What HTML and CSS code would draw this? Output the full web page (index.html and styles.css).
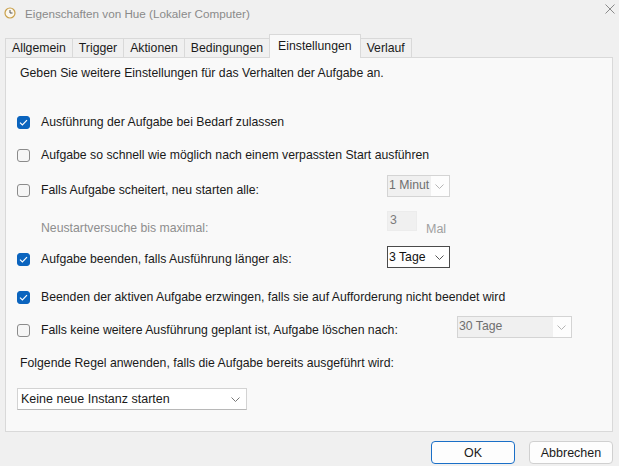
FILE: index.html
```html
<!DOCTYPE html>
<html lang="de">
<head>
<meta charset="utf-8">
<title>Eigenschaften von Hue</title>
<link rel="stylesheet" href="styles.css">
</head>
<body>
<div class="window">
  <div class="titlebar">
    <svg class="app-icon" width="12" height="12" viewBox="0 0 12 12">
      <circle cx="6" cy="6" r="5" fill="#fbf7ee" stroke="#c9a04a" stroke-width="1.2"/>
      <path d="M6 3 V6 H8.5" fill="none" stroke="#555" stroke-width="1"/>
    </svg>
    <span class="title">Eigenschaften von Hue (Lokaler Computer)</span>
    <svg class="close" width="10" height="10" viewBox="0 0 10 10">
      <path d="M0.5 0.5 L9.5 9.5 M9.5 0.5 L0.5 9.5" stroke="#8a8a8a" stroke-width="1"/>
    </svg>
  </div>

  <div class="tabs">
    <div class="tab">Allgemein</div>
    <div class="tab">Trigger</div>
    <div class="tab">Aktionen</div>
    <div class="tab">Bedingungen</div>
    <div class="tab tab-active">Einstellungen</div>
    <div class="tab">Verlauf</div>
  </div>

  <div class="panel">
    <div class="intro">Geben Sie weitere Einstellungen für das Verhalten der Aufgabe an.</div>

    <div class="row row-1">
      <div class="label"><span class="cb cb-checked"><svg width="9" height="7" viewBox="0 0 9 7"><path d="M1 3.6 L3.4 6 L8 1.2" fill="none" stroke="#fff" stroke-width="1.2"/></svg></span><span>Ausführung der Aufgabe bei Bedarf zulassen</span></div>
    </div>

    <div class="row row-2">
      <div class="label"><span class="cb"></span><span>Aufgabe so schnell wie möglich nach einem verpassten Start ausführen</span></div>
    </div>

    <div class="row row-3">
      <div class="label label-fixed lab-mt7"><span class="cb"></span><span>Falls Aufgabe scheitert, neu starten alle:</span></div>
      <div class="select select-disabled select-small">
        <span class="select-value">1 Minut</span>
        <svg class="chev" width="9" height="5" viewBox="0 0 9 5"><path d="M0.5 0.5 L4.5 4.5 L8.5 0.5" fill="none" stroke="#b5b5b5" stroke-width="1"/></svg>
      </div>
    </div>

    <div class="row row-4">
      <div class="label label-fixed lab-mt9 muted"><span class="cb-space"></span><span>Neustartversuche bis maximal:</span></div>
      <div class="field">3</div>
      <div class="unit">Mal</div>
    </div>

    <div class="row row-5">
      <div class="label label-fixed lab-mt5"><span class="cb cb-checked"><svg width="9" height="7" viewBox="0 0 9 7"><path d="M1 3.6 L3.4 6 L8 1.2" fill="none" stroke="#fff" stroke-width="1.2"/></svg></span><span>Aufgabe beenden, falls Ausführung länger als:</span></div>
      <div class="select select-active select-small">
        <span class="select-value">3 Tage</span>
        <svg class="chev" width="9" height="5" viewBox="0 0 9 5"><path d="M0.5 0.5 L4.5 4.5 L8.5 0.5" fill="none" stroke="#555" stroke-width="1"/></svg>
      </div>
    </div>

    <div class="row row-6">
      <div class="label"><span class="cb cb-checked"><svg width="9" height="7" viewBox="0 0 9 7"><path d="M1 3.6 L3.4 6 L8 1.2" fill="none" stroke="#fff" stroke-width="1.2"/></svg></span><span>Beenden der aktiven Aufgabe erzwingen, falls sie auf Aufforderung nicht beendet wird</span></div>
    </div>

    <div class="row row-7">
      <div class="label label-wide lab-mt6"><span class="cb"></span><span>Falls keine weitere Ausführung geplant ist, Aufgabe löschen nach:</span></div>
      <div class="select select-disabled select-wide">
        <span class="select-value">30 Tage</span>
        <svg class="chev" width="9" height="5" viewBox="0 0 9 5"><path d="M0.5 0.5 L4.5 4.5 L8.5 0.5" fill="none" stroke="#b5b5b5" stroke-width="1"/></svg>
      </div>
    </div>

    <div class="rule-text">Folgende Regel anwenden, falls die Aufgabe bereits ausgeführt wird:</div>

    <div class="select select-rule">
      <span class="select-value">Keine neue Instanz starten</span>
      <svg class="chev" width="9" height="5" viewBox="0 0 9 5"><path d="M0.5 0.5 L4.5 4.5 L8.5 0.5" fill="none" stroke="#777" stroke-width="1"/></svg>
    </div>
  </div>

  <div class="buttons">
    <button class="btn btn-default">OK</button>
    <button class="btn">Abbrechen</button>
  </div>
</div>
</body>
</html>
```

FILE: styles.css
```css
* { box-sizing: border-box; }
html, body {
  margin: 0;
  padding: 0;
  background: #f0f0f0;
}
body {
  font-family: "Liberation Sans", Arial, sans-serif;
  font-size: 12.25px;
  color: #1a1a1a;
  width: 619px;
  height: 466px;
  overflow: hidden;
}
.window {
  display: flex;
  flex-direction: column;
  width: 619px;
  height: 466px;
}
.titlebar {
  height: 26px;
  display: flex;
  align-items: center;
  padding-left: 4px;
  padding-right: 4px;
}
.app-icon { flex: none; }
.title {
  margin-left: 9px;
  color: #8a8a8a;
  font-size: 11.7px;
  flex: 1;
}
.close {
  flex: none;
  align-self: flex-start;
  margin-top: 4px;
}
.tabs {
  display: flex;
  align-items: flex-end;
  height: 31px;
  padding-left: 5px;
  position: relative;
  z-index: 1;
}
.tab {
  height: 19px;
  padding: 1px 6px 0 6px;
  line-height: 17px;
  border: 1px solid #d9d9d9;
  border-bottom: none;
  margin-right: -1px;
  background: #f0f0f0;
  white-space: nowrap;
}
.tab-active {
  height: 24px;
  margin-bottom: -1px;
  background: #f9f9f9;
  line-height: 20px;
  padding: 1px 8px 0 8px;
  position: relative;
  z-index: 2;
}
.panel {
  margin: 0 6px 0 5px;
  height: 375px;
  border: 1px solid #d9d9d9;
  background: #f9f9f9;
  display: flex;
  flex-direction: column;
  align-items: flex-start;
}
.intro {
  margin-top: 7px;
  margin-left: 14px;
  line-height: 16px;
}
.row {
  display: flex;
  align-items: flex-start;
}
.row-1 { margin-top: 33px; }
.row-2 { margin-top: 17px; }
.row-3 { margin-top: 12px; }
.row-4 { margin-top: 13px; }
.row-5 { margin-top: 9px; }
.row-6 { margin-top: 21px; }
.row-7 { margin-top: 11px; }
.label {
  display: flex;
  align-items: center;
  margin-left: 11px;
  height: 16px;
  line-height: 16px;
  white-space: nowrap;
}
.label-fixed { width: 370px; }
.label-wide { width: 440px; }
.lab-mt5 { margin-top: 5px; }
.lab-mt6 { margin-top: 6px; }
.lab-mt7 { margin-top: 7px; }
.lab-mt9 { margin-top: 9px; }
.muted { color: #8e8e8e; }
.cb {
  flex: none;
  width: 13px;
  height: 13px;
  border: 1px solid #8b8b8b;
  border-radius: 3px;
  background: #f6f6f6;
  margin-right: 11px;
  display: flex;
  align-items: center;
  justify-content: center;
}
.cb-checked {
  background: #0b64be;
  border-color: #0b64be;
}
.cb-space {
  width: 13px;
  margin-right: 11px;
  flex: none;
}
.select {
  display: flex;
  align-items: center;
  height: 22px;
  border: 1px solid #c9c9c9;
  background: #fff;
  position: relative;
}
.select-value {
  flex: 1;
  white-space: nowrap;
  overflow: hidden;
  line-height: 18px;
  padding-left: 1px;
}
.chev { flex: none; margin-right: 5px; }
.select-small { width: 63px; }
.select-disabled {
  border-color: #d4d4d4;
  color: #6f6f6f;
  background: #fdfdfd;
}
.select-disabled .select-value {
  background: #f0f0f0;
  height: 20px;
  margin-right: 4px;
}
.select-active { border-color: #4a4a4a; }
.select-active .select-value { color: #111; }
.select-wide { width: 115px; }
.field {
  width: 30px;
  height: 20px;
  background: #f0f0f0;
  border: 1px solid #ececec;
  color: #7a7a7a;
  line-height: 16px;
  padding-left: 2px;
}
.unit {
  margin-left: 9px;
  margin-top: 10px;
  color: #a0a0a0;
  line-height: 16px;
  font-size: 12.5px;
}
.rule-text {
  margin-top: 17px;
  margin-left: 14px;
  line-height: 16px;
}
.select-rule {
  margin-top: 17px;
  margin-left: 11px;
  width: 230px;
  border-color: #d3d3d3;
  border-bottom-color: #b8b8b8;
}
.select-rule .select-value { padding-left: 3px; font-size: 12.5px; }
.select-rule .chev { margin-right: 6px; }
.buttons {
  display: flex;
  justify-content: flex-end;
  gap: 14px;
  margin-top: 9px;
  padding-right: 6px;
}
.btn {
  width: 84px;
  height: 23px;
  font-family: "Liberation Sans", Arial, sans-serif;
  font-size: 12.5px;
  color: #1a1a1a;
  background: #fdfdfd;
  border: 1px solid #d0d0d0;
  border-radius: 4px;
  padding: 0;
}
.btn-default {
  border-color: #1a6fc7;
}
```
